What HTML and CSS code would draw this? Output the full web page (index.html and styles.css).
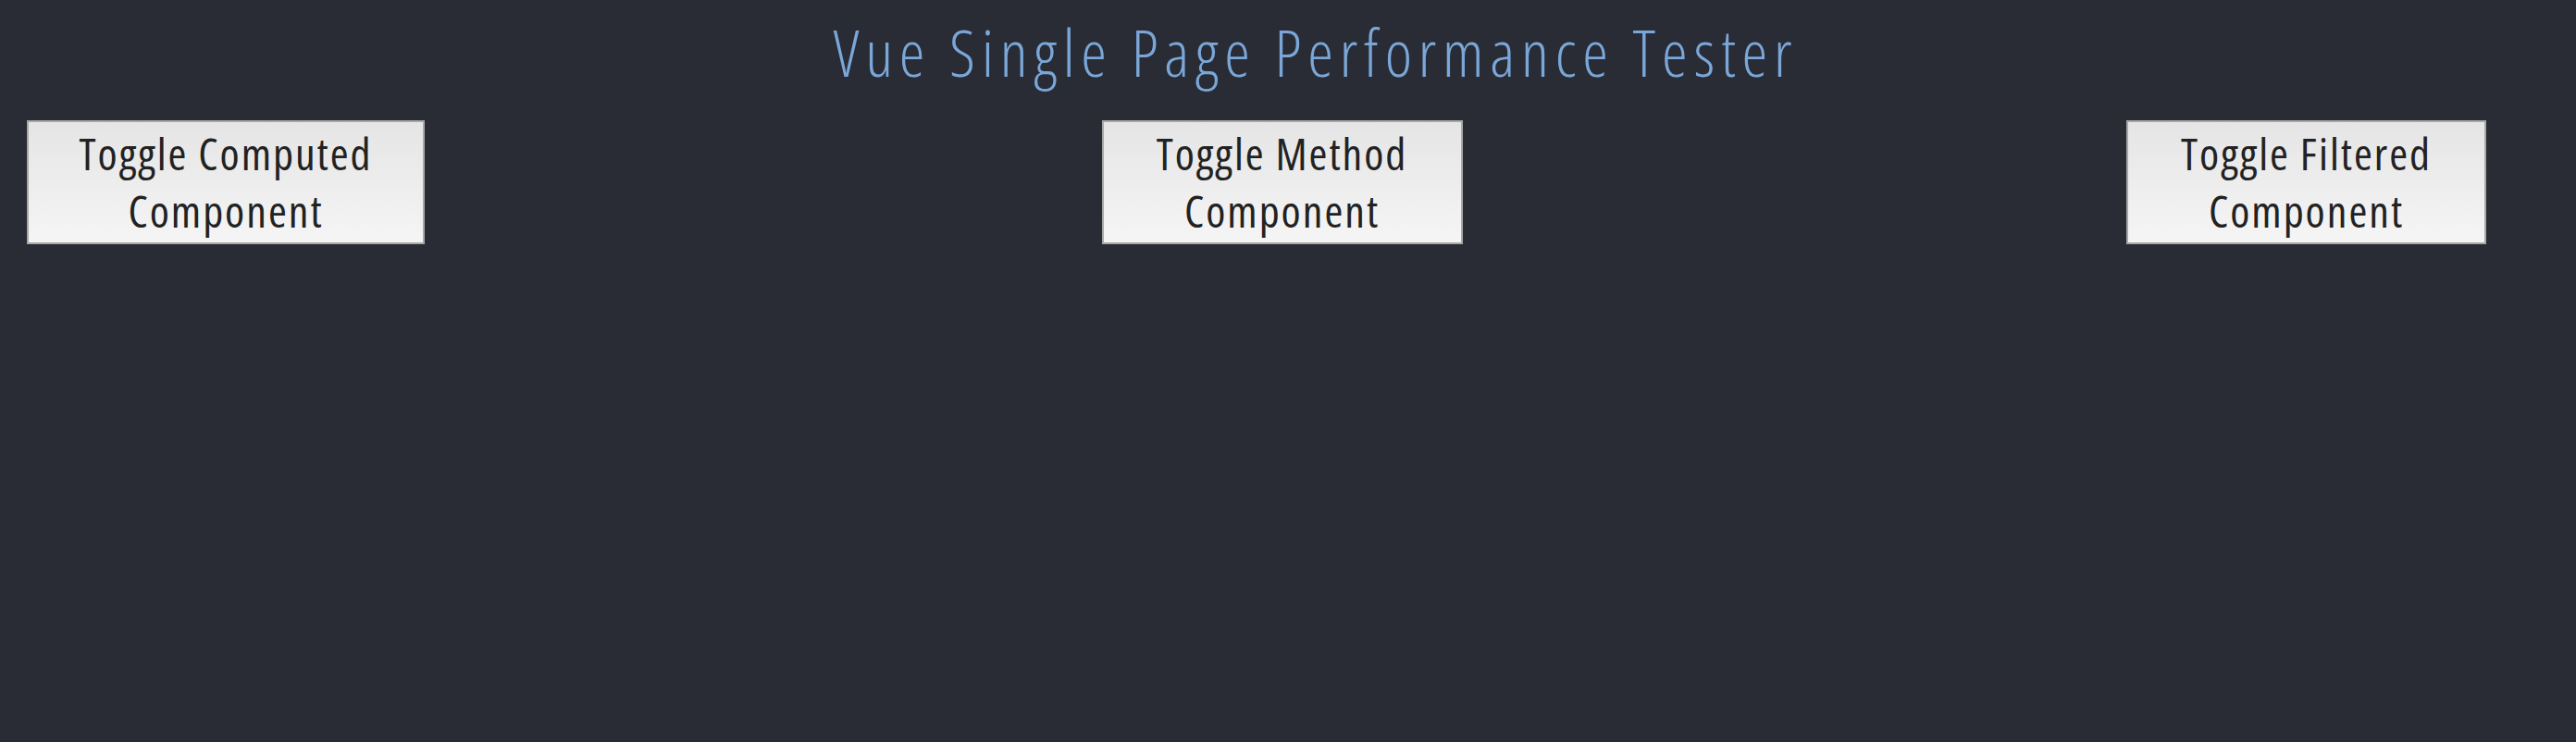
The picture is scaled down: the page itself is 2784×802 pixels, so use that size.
FILE: index.html
```html
<!DOCTYPE html>
<html lang="en">
<head>
<meta charset="utf-8">
<title>Vue Single Page Performance Tester</title>
<link rel="stylesheet" href="styles.css">
</head>
<body>
<div class="app">
  <h1 class="title">Vue Single Page Performance Tester</h1>
  <div class="controls">
    <button class="toggle toggle--computed">Toggle Computed Component</button>
    <button class="toggle toggle--method">Toggle Method Component</button>
    <button class="toggle toggle--filtered">Toggle Filtered Component</button>
  </div>
</div>
</body>
</html>
```
FILE: styles.css
```css
html, body {
  margin: 0;
  padding: 0;
  background: #292c35;
  height: 100%;
}
.app {
  font-family: "Open Sans", "DejaVu Sans", sans-serif;
  font-stretch: 75%;
}
.title {
  margin: 0;
  padding: 8px 0 0 60px;
  height: 122px;
  box-sizing: border-box;
  text-align: center;
  font-weight: 300;
  font-size: 70px;
  letter-spacing: 6.8px;
  line-height: 96px;
  color: #7aa7d8;
}
.controls {
  display: flex;
  justify-content: space-between;
  align-items: flex-start;
  padding: 8px 97px 0 29px;
}
.toggle {
  box-sizing: border-box;
  height: 134px;
  padding: 2px 10px;
  border: 2px solid #a8a8a8;
  background: linear-gradient(#e5e5e5, #f5f5f5);
  color: #222;
  font-family: inherit;
  font-stretch: 75%;
  font-size: 48px;
  letter-spacing: 2px;
  line-height: 62px;
  text-align: center;
}
.toggle--computed { width: 430px; padding: 2px 30px; }
.toggle--method { width: 390px; padding: 2px 40px; margin-left: 14px; }
.toggle--filtered { width: 389px; padding: 2px 40px; }
```
